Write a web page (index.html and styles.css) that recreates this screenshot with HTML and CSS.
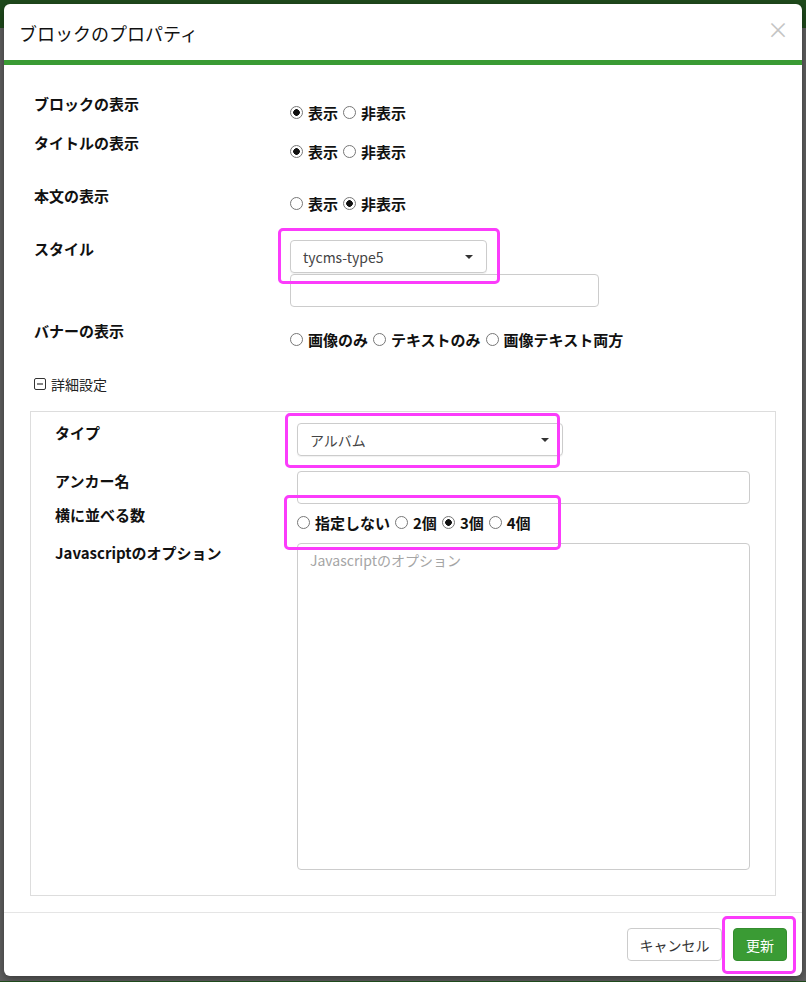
FILE: index.html
```html
<!DOCTYPE html>
<html lang="ja">
<head>
  <meta charset="UTF-8" />
  <title>ブロックのプロパティ</title>
  <link rel="stylesheet" href="styles.css">
</head>
<body>
  <div class="modal">
    <!-- Header -->
    <div class="modal-header">
      <div class="modal-title">ブロックのプロパティ</div>
      <span class="close">&times;</span>
    </div>

    <div class="modal-body">
      <div class="row">
        <div class="row-label">ブロックの表示</div>
        <div class="radios">
          <label><input type="radio" name="block" checked>表示</label>
          <label><input type="radio" name="block">非表示</label>
        </div>
      </div>

      <div class="row row-tall">
        <div class="row-label">タイトルの表示</div>
        <div class="radios">
          <label><input type="radio" name="title" checked>表示</label>
          <label><input type="radio" name="title">非表示</label>
        </div>
      </div>

      <div class="row row-tall">
        <div class="row-label">本文の表示</div>
        <div class="radios radios-low">
          <label><input type="radio" name="body">表示</label>
          <label><input type="radio" name="body" checked>非表示</label>
        </div>
      </div>

      <div class="row row-style">
        <div class="row-label">スタイル</div>
        <div class="stack">
          <div class="select select-style mark-wrap">
            <span>tycms-type5</span>
            <span class="caret"></span>
            <div class="mark mark-style"></div>
          </div>
          <div class="text-input input-style"></div>
        </div>
      </div>

      <div class="row row-tall">
        <div class="row-label">バナーの表示</div>
        <div class="radios">
          <label><input type="radio" name="banner">画像のみ</label>
          <label><input type="radio" name="banner">テキストのみ</label>
          <label><input type="radio" name="banner">画像テキスト両方</label>
        </div>
      </div>

      <div class="toggle">
        <svg width="12" height="12" viewBox="0 0 12 12">
          <rect x="0.5" y="0.5" width="11" height="11" rx="1.5" fill="none" stroke="#333" stroke-width="1"/>
          <line x1="3" y1="6" x2="9" y2="6" stroke="#333" stroke-width="1.2"/>
        </svg>
        詳細設定
      </div>

      <!-- Details panel -->
      <div class="panel">
        <div class="prow prow-type">
          <div class="row-label">タイプ</div>
          <div class="select select-type mark-wrap">
            <span>アルバム</span>
            <span class="caret"></span>
            <div class="mark mark-type"></div>
          </div>
        </div>

        <div class="prow prow-anchor">
          <div class="row-label">アンカー名</div>
          <div class="text-input"></div>
        </div>

        <div class="prow prow-cols">
          <div class="row-label">横に並べる数</div>
          <div class="radios radios-panel mark-wrap">
            <label><input type="radio" name="cols">指定しない</label>
            <label><input type="radio" name="cols">2個</label>
            <label><input type="radio" name="cols" checked>3個</label>
            <label><input type="radio" name="cols">4個</label>
            <div class="mark mark-cols"></div>
          </div>
        </div>

        <div class="prow">
          <div class="row-label">Javascriptのオプション</div>
          <textarea class="textarea" placeholder="Javascriptのオプション"></textarea>
        </div>
      </div>
    </div>

    <!-- Footer -->
    <div class="modal-footer">
      <button class="btn btn-default">キャンセル</button>
      <button class="btn btn-success mark-wrap">更新<span class="mark mark-save"></span></button>
    </div>
  </div>
</body>
</html>
```

FILE: styles.css
```css
body {
  margin: 0;
  padding: 4px 4px 5px;
  background: linear-gradient(#1f4a1c 0, #1f4a1c 28px, #5f5f5f 28px);
  font-family: "Noto Sans CJK JP", "Noto Sans", sans-serif;
  color: #111;
}

.modal {
  background: #fff;
  border-radius: 6px;
  box-shadow: 0 3px 9px rgba(0, 0, 0, 0.4);
  overflow: hidden;
}

/* Header */
.modal-header {
  height: 56px;
  display: flex;
  align-items: center;
  justify-content: space-between;
  padding: 0 15px;
  border-bottom: 5px solid #3a9b34;
}

.modal-title {
  font-size: 18px;
  color: #111;
  margin-top: 2px;
}

.close {
  font-size: 22px;
  color: #c4c4c4;
  line-height: 1;
  margin-right: -2px;
  margin-top: -8px;
}

/* Body */
.modal-body {
  padding: 29px 26px 16px;
}

.row {
  display: grid;
  grid-template-columns: 260px 1fr;
  height: 39px;
}

.row-tall {
  height: 53px;
}

.row-style {
  height: 82px;
}

.row-label {
  font-size: 15px;
  font-weight: bold;
  line-height: 20px;
  padding-left: 4px;
}

.radios {
  display: flex;
  align-items: center;
  gap: 5px;
  padding-top: 8px;
  height: 20px;
  font-size: 15px;
  font-weight: bold;
}

.radios-low {
  padding-top: 7px;
}

.radios label {
  display: flex;
  align-items: center;
}

input[type="radio"] {
  appearance: none;
  width: 13px;
  height: 13px;
  margin: 1px 5px 0 0;
  border: 1px solid #777;
  border-radius: 50%;
  background: #fff;
}

input[type="radio"]:checked {
  background: radial-gradient(circle, #111 0, #111 3px, #fff 3.6px);
}

.stack {
  display: flex;
  flex-direction: column;
  gap: 1px;
}

.select {
  height: 31px;
  border: 1px solid #ccc;
  border-radius: 4px;
  display: flex;
  align-items: center;
  justify-content: space-between;
  padding: 0 12px;
  font-size: 14px;
  color: #444;
  box-shadow: 0 1px 1px rgba(0, 0, 0, 0.06);
}

.select-style {
  width: 171px;
  margin-top: 1px;
}

.caret {
  width: 0;
  height: 0;
  border-left: 4px solid transparent;
  border-right: 4px solid transparent;
  border-top: 4px solid #333;
  margin-right: 1px;
}

.text-input {
  height: 31px;
  border: 1px solid #ccc;
  border-radius: 4px;
}

.input-style {
  width: 307px;
}

.toggle {
  display: flex;
  align-items: center;
  gap: 5px;
  font-size: 14px;
  line-height: 20px;
  color: #222;
  padding-left: 4px;
  margin-bottom: 17px;
}

/* Details panel */
.panel {
  border: 1px solid #ddd;
  padding: 11px 25px 25px 24px;
}

.panel .row-label {
  padding-left: 0;
}

.prow {
  display: grid;
  grid-template-columns: 242px 1fr;
}

.prow-type {
  height: 48px;
}

.prow-anchor {
  height: 34px;
}

.prow-cols {
  height: 38px;
}

.select-type {
  width: 240px;
}

.radios-panel {
  padding-top: 7px;
}

.textarea {
  display: block;
  height: 327px;
  box-sizing: border-box;
  border: 1px solid #ccc;
  border-radius: 4px;
  padding: 6px 12px;
  font-family: inherit;
  font-size: 14px;
  resize: none;
  margin: 0;
}

.textarea::placeholder {
  color: #a5a5a5;
}

/* Footer */
.modal-footer {
  border-top: 1px solid #e5e5e5;
  padding: 15px 15px 15px;
  display: flex;
  justify-content: flex-end;
  gap: 11px;
}

.btn {
  height: 33px;
  border-radius: 4px;
  font-family: inherit;
  font-size: 14px;
  padding: 0;
  white-space: nowrap;
  cursor: pointer;
}

.btn-default {
  background: #fff;
  border: 1px solid #ccc;
  color: #333;
  width: 95px;
}

.btn-success {
  background: #3a9b34;
  border: 1px solid #348d2f;
  color: #fff;
  width: 54px;
}

/* Magenta annotation boxes */
.mark-wrap {
  position: relative;
}

.mark {
  position: absolute;
  border: 3px solid #fb3cfb;
  border-radius: 5px;
  pointer-events: none;
}

.mark-style {
  top: -13px;
  left: -13px;
  right: -14px;
  bottom: -12px;
}

.mark-type {
  top: -11px;
  left: -13px;
  right: 2px;
  bottom: -13px;
}

.mark-cols {
  top: -10px;
  left: -13px;
  width: 271px;
  height: 49px;
}

.mark-save {
  top: -13px;
  left: -12px;
  right: -10px;
  bottom: -14px;
}
```
